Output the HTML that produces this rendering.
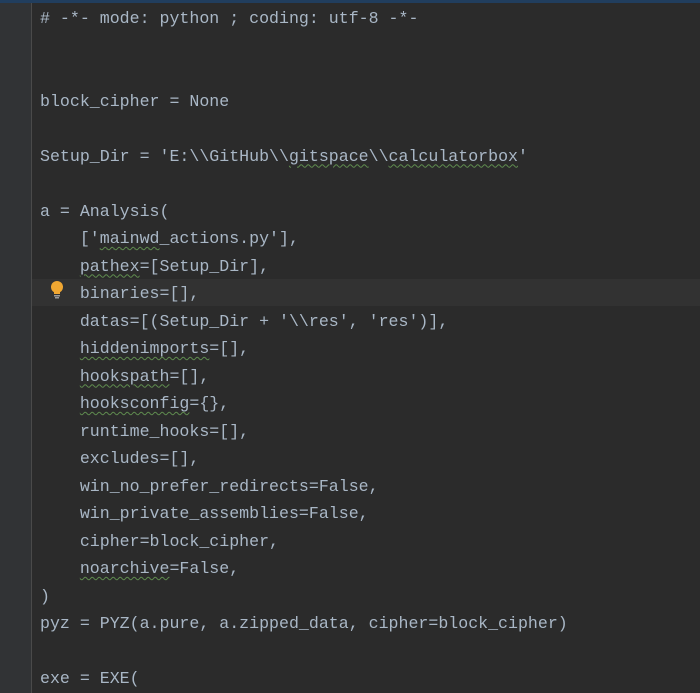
<!DOCTYPE html>
<html><head><meta charset="utf-8"><style>
html,body{margin:0;padding:0;width:700px;height:693px;overflow:hidden;background:#2b2b2b}
.top{position:absolute;left:0;top:0;width:700px;height:3px;background:#213e5e}
.gut{position:absolute;left:0;top:3px;width:31px;height:690px;background:#313335;border-right:1px solid #4a4a4a}
.hl{position:absolute;left:32px;top:279px;width:668px;height:27px;background:#323232}
.code{position:absolute;left:40px;top:5px;margin:0;font-family:"Liberation Mono",monospace;font-size:16.6px;line-height:27.5px;color:#a9b7c6;white-space:pre}
u{text-decoration:underline wavy #5f8c4f;text-decoration-thickness:1px;text-underline-offset:3px}
.bulb{position:absolute;left:50px;top:281px}
</style></head><body>
<div class="top"></div><div class="gut"></div><div class="hl"></div>
<svg class="bulb" width="14" height="18" viewBox="0 0 14 18"><circle cx="7" cy="6" r="6" fill="#f0a732"/><rect x="4" y="10" width="6" height="3" fill="#f0a732"/><rect x="4" y="14" width="6" height="1.5" fill="#9a9a9a"/><rect x="5" y="16" width="4" height="1.5" fill="#9a9a9a"/></svg>
<pre class="code"># -*- mode: python ; coding: utf-8 -*-


block_cipher = None

Setup_Dir = 'E:\\GitHub\\<u>gitspace</u>\\<u>calculatorbox</u>'

a = Analysis(
    ['<u>mainwd</u>_actions.py'],
    <u>pathex</u>=[Setup_Dir],
    binaries=[],
    datas=[(Setup_Dir + '\\res', 'res')],
    <u>hiddenimports</u>=[],
    <u>hookspath</u>=[],
    <u>hooksconfig</u>={},
    runtime_hooks=[],
    excludes=[],
    win_no_prefer_redirects=False,
    win_private_assemblies=False,
    cipher=block_cipher,
    <u>noarchive</u>=False,
)
pyz = PYZ(a.pure, a.zipped_data, cipher=block_cipher)

exe = EXE(</pre>
</body></html>
